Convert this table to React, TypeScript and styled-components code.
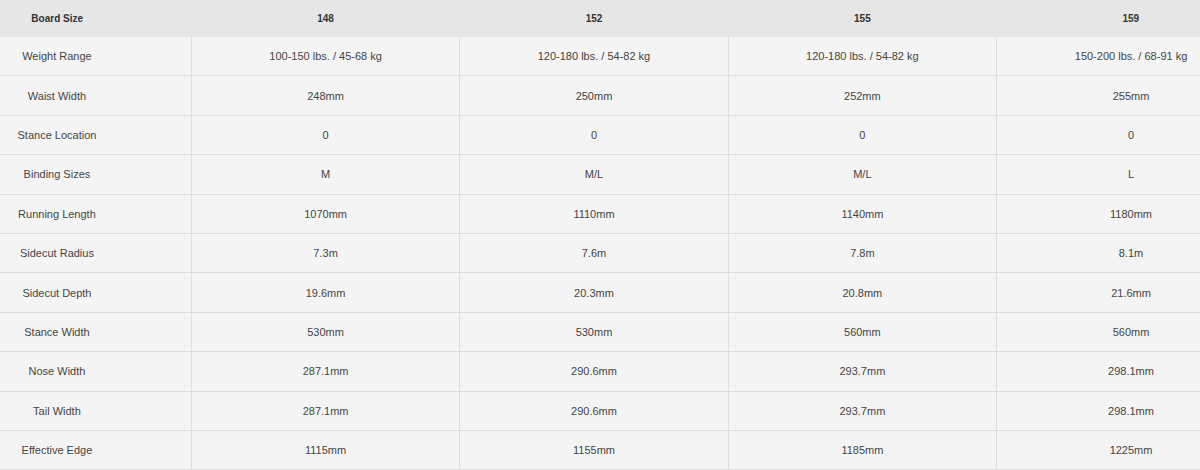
import React from "react";
import styled, { createGlobalStyle } from "styled-components";

// Board sizes and the spec rows shown under them
const sizes = ["148", "152", "155", "159"];

const specs: { label: string; values: string[] }[] = [
  { label: "Weight Range", values: ["100-150 lbs. / 45-68 kg", "120-180 lbs. / 54-82 kg", "120-180 lbs. / 54-82 kg", "150-200 lbs. / 68-91 kg"] },
  { label: "Waist Width", values: ["248mm", "250mm", "252mm", "255mm"] },
  { label: "Stance Location", values: ["0", "0", "0", "0"] },
  { label: "Binding Sizes", values: ["M", "M/L", "M/L", "L"] },
  { label: "Running Length", values: ["1070mm", "1110mm", "1140mm", "1180mm"] },
  { label: "Sidecut Radius", values: ["7.3m", "7.6m", "7.8m", "8.1m"] },
  { label: "Sidecut Depth", values: ["19.6mm", "20.3mm", "20.8mm", "21.6mm"] },
  { label: "Stance Width", values: ["530mm", "530mm", "560mm", "560mm"] },
  { label: "Nose Width", values: ["287.1mm", "290.6mm", "293.7mm", "298.1mm"] },
  { label: "Tail Width", values: ["287.1mm", "290.6mm", "293.7mm", "298.1mm"] },
  { label: "Effective Edge", values: ["1115mm", "1155mm", "1185mm", "1225mm"] },
];

const GlobalStyle = createGlobalStyle`
  html, body {
    margin: 0;
    padding: 0;
    background: #f4f4f4;
  }
  body {
    font-family: "Liberation Sans", Arial, sans-serif;
    color: #444;
  }
`;

const App: React.FC = () => {
  return (
    <>
      <GlobalStyle />
      <Viewport>
        <SpecTable>
          <thead>
            <tr>
              <HeadCell>Board Size</HeadCell>
              {sizes.map((s) => (
                <HeadCell key={s}>{s}</HeadCell>
              ))}
            </tr>
          </thead>
          <tbody>
            {specs.map((row) => (
              <tr key={row.label}>
                <LabelCell>{row.label}</LabelCell>
                {row.values.map((v, i) => (
                  <DataCell key={i}>{v}</DataCell>
                ))}
              </tr>
            ))}
          </tbody>
        </SpecTable>
      </Viewport>
    </>
  );
};

const Viewport = styled.div`
  width: 1200px;
  height: 470px;
  overflow: hidden;
  background: #f4f4f4;
`;

/* table is wider than the window, cropped on both sides */
const SpecTable = styled.table`
  width: 1342px;
  margin-left: -77px;
  border-collapse: collapse;
  table-layout: fixed;
  font-size: 11px;
`;

const HeadCell = styled.th`
  height: 37px;
  padding: 0;
  background: #e6e6e6;
  color: #333;
  font-size: 10px;
  font-weight: bold;
  text-align: center;
  vertical-align: middle;
`;

const DataCell = styled.td`
  height: 38.4px;
  padding: 0;
  text-align: center;
  vertical-align: middle;
  color: #444;
  border-bottom: 1px solid #dedede;
  border-left: 1px solid #dedede;
`;

const LabelCell = styled(DataCell)`
  border-left: none;
`;

export default App;
